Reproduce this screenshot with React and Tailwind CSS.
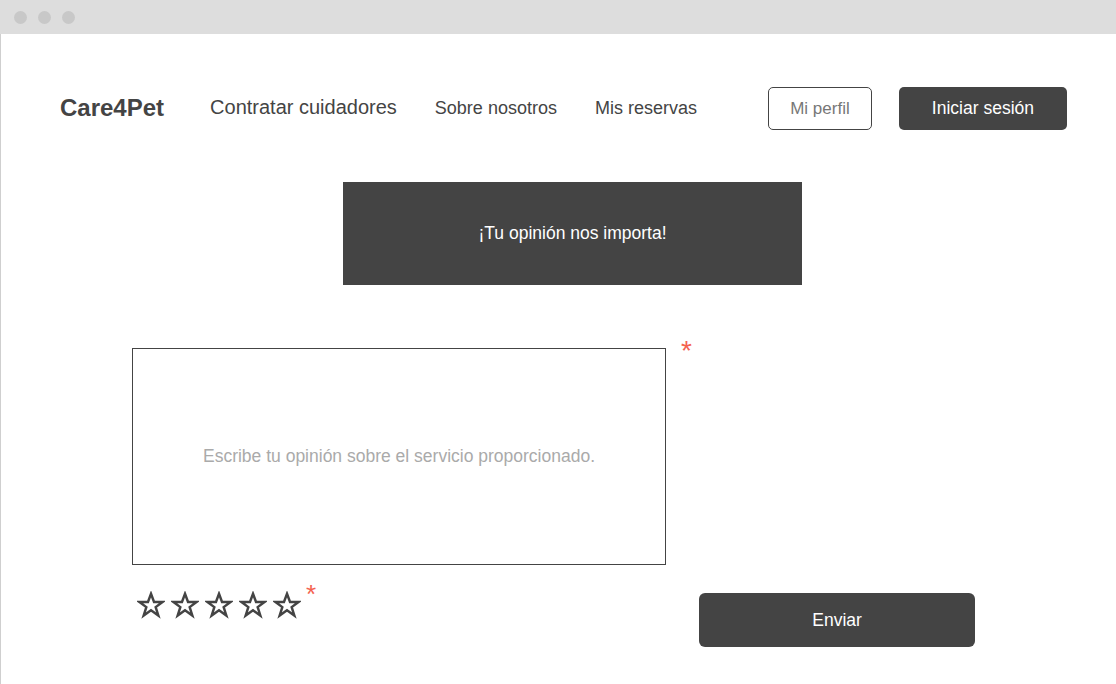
import React from 'react'

function Star() {
  return (
    <svg width="28" height="28" viewBox="0 0 24 24" fill="none" stroke="#444" strokeWidth="2.1" strokeLinejoin="miter">
      <path d="M12 2.4l2.6 7h7.3l-5.9 4.4 2.3 7.2-6.3-4.5-6.3 4.5 2.3-7.2-5.9-4.4h7.3z" />
    </svg>
  )
}

export default function App() {
  return (
    <div className="w-[1116px] h-[684px] bg-white flex flex-col overflow-hidden" style={{ fontFamily: '"Liberation Sans", Arial, sans-serif' }}>
      {/* Window bar */}
      <div className="h-[34px] bg-[#dddddd] flex items-center gap-[11px] pl-[14px] shrink-0">
        <span className="w-[13px] h-[13px] rounded-full bg-[#c8c8c8]" />
        <span className="w-[13px] h-[13px] rounded-full bg-[#c8c8c8]" />
        <span className="w-[13px] h-[13px] rounded-full bg-[#c8c8c8]" />
      </div>

      <div className="flex-1 flex flex-col border-l border-[#cfcfcf]">
        {/* Nav */}
        <div className="flex items-center pl-[59px] pt-[53px] text-[#444]">
          <span className="text-[24px] font-bold mb-[1px]">Care4Pet</span>
          <span className="ml-[46px] text-[20px] mb-[3px]">Contratar cuidadores</span>
          <span className="ml-[38px] text-[18px] mb-[1px]">Sobre nosotros</span>
          <span className="ml-[38px] text-[18px] mb-[1px]">Mis reservas</span>
          <button className="ml-[71px] w-[104px] h-[43px] border border-[#444] rounded-[5px] text-[17px] text-[#777]">Mi perfil</button>
          <button className="ml-[27px] w-[168px] h-[43px] bg-[#444] rounded-[5px] text-[17.5px] text-white">Iniciar sesión</button>
        </div>

        {/* Banner */}
        <div className="mt-[52px] ml-[342px] w-[459px] h-[103px] bg-[#444] flex items-center justify-center text-white text-[17.5px]">
          ¡Tu opinión nos importa!
        </div>

        {/* Opinion box */}
        <div className="flex items-start mt-[63px] ml-[131px]">
          <div className="w-[534px] h-[217px] border border-[#444] flex items-center justify-center text-[17.5px] text-[#aaaaaa]">
            Escribe tu opinión sobre el servicio proporcionado.
          </div>
          <span className="ml-[15px] -mt-[11px] text-[28px] leading-none text-[#f4624f]">*</span>
        </div>

        {/* Rating + submit */}
        <div className="flex items-start ml-[136px] mt-[26px]">
          <div className="flex items-center gap-[6px]">
            <Star />
            <Star />
            <Star />
            <Star />
            <Star />
          </div>
          <span className="ml-[5px] -mt-[10px] text-[26px] leading-none text-[#f4624f]">*</span>
          <button className="ml-[383px] mt-[2px] w-[276px] h-[54px] bg-[#444] rounded-[6px] text-white text-[17.5px]">Enviar</button>
        </div>
      </div>
    </div>
  )
}
